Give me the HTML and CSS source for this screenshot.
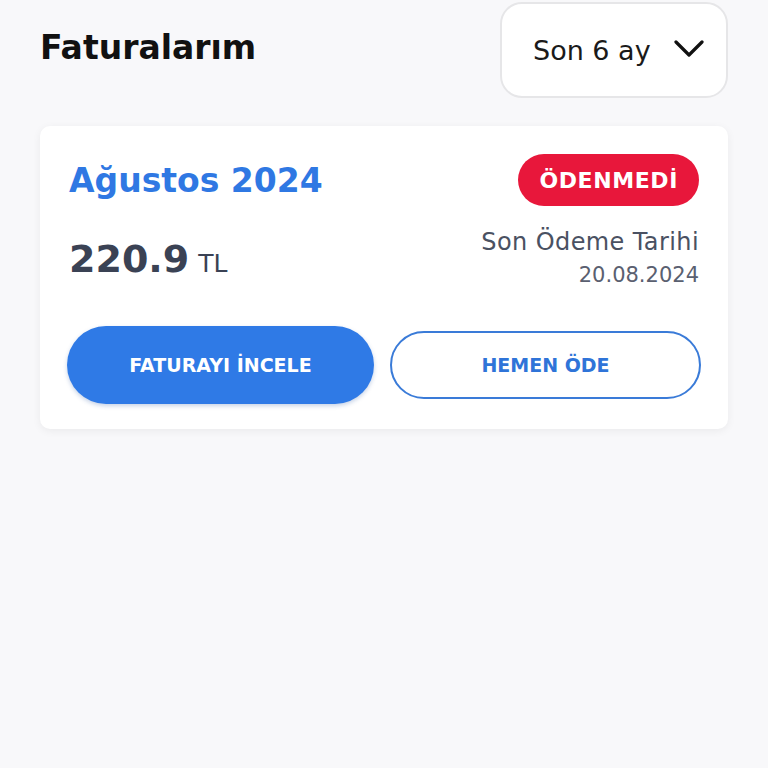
FILE: index.html
```html
<!DOCTYPE html>
<html lang="tr">
<head>
<meta charset="utf-8">
<link rel="stylesheet" href="styles.css">
</head>
<body>
<div class="page">
  <header class="header">
    <h1 class="title">Faturalarım</h1>
    <div class="select">
      <span class="select-label">Son 6 ay</span>
      <svg class="chevron" width="30" height="20" viewBox="0 0 30 20"><path d="M2 3 L15 16 L28 3" fill="none" stroke="#111" stroke-width="3.2" stroke-linecap="round" stroke-linejoin="round"/></svg>
    </div>
  </header>
  <section class="card">
    <div class="row top">
      <div class="month">Ağustos 2024</div>
      <div class="badge">ÖDENMEDİ</div>
    </div>
    <div class="row mid">
      <div class="amount"><span class="num">220.9</span><span class="cur">TL</span></div>
      <div class="due">
        <div class="due-label">Son Ödeme Tarihi</div>
        <div class="due-date">20.08.2024</div>
      </div>
    </div>
    <div class="actions">
      <button class="btn primary">FATURAYI İNCELE</button>
      <button class="btn outline">HEMEN ÖDE</button>
    </div>
  </section>
</div>
</body>
</html>
```

FILE: styles.css
```css
* { box-sizing: border-box; }
html, body { margin: 0; padding: 0; }
body {
  background: #f8f8fa;
  font-family: "DejaVu Sans", "Open Sans", sans-serif;
  width: 768px;
  height: 768px;
}
.page { padding: 2px 40px 0 40px; }
.header {
  display: flex;
  justify-content: space-between;
  align-items: center;
}
.title {
  margin: 0;
  font-size: 33px;
  font-weight: 700;
  color: #111;
  margin-top: -6px;
}
.select {
  width: 228px;
  height: 96px;
  background: #fff;
  border: 2px solid #e6e6e8;
  border-radius: 22px;
  display: flex;
  align-items: center;
  padding-left: 31px;
  padding-right: 22px;
  justify-content: space-between;
}
.select-label { font-size: 27px; color: #1a1a1a; }
.chevron { display: block; margin-top: -2px; }
.card {
  margin-top: 28px;
  background: #fff;
  border-radius: 10px;
  box-shadow: 0 2px 8px rgba(0,0,0,0.06);
  padding: 28px 29px 25px 29px;
}
.row { display: flex; justify-content: space-between; }
.top { align-items: center; }
.month { font-size: 33px; font-weight: 700; color: #2f78e3; }
.badge {
  background: #e8173b;
  color: #fff;
  font-weight: 700;
  font-size: 22px;
  letter-spacing: 0.6px;
  height: 52px;
  padding: 0 21px;
  border-radius: 26px;
  display: flex;
  align-items: center;
}
.mid { margin-top: 22px; align-items: flex-start; }
.amount { color: #3a4254; margin-top: 9px; }
.num { font-size: 38px; font-weight: 700; }
.cur { font-size: 25px; margin-left: 9px; }
.due { text-align: right; color: #4a5162; }
.due-label { font-size: 24px; letter-spacing: 0.4px; }
.due-date { font-size: 21px; margin-top: 7px; color: #5a6070; }
.actions {
  display: flex;
  gap: 16px;
  align-items: center;
  margin-top: 39px;
  margin-left: -2px;
  margin-right: -2px;
}
.btn {
  flex: 1;
  font-family: inherit;
  font-weight: 700;
  font-size: 19px;
  border-radius: 40px;
  cursor: pointer;
}
.primary {
  height: 78px;
  background: #2f7ae6;
  color: #fff;
  border: none;
  box-shadow: 0 2px 4px rgba(30,80,160,0.25);
}
.outline {
  height: 68px;
  background: #fff;
  color: #2f74d8;
  border: 2px solid #3a7bd8;
}
```
